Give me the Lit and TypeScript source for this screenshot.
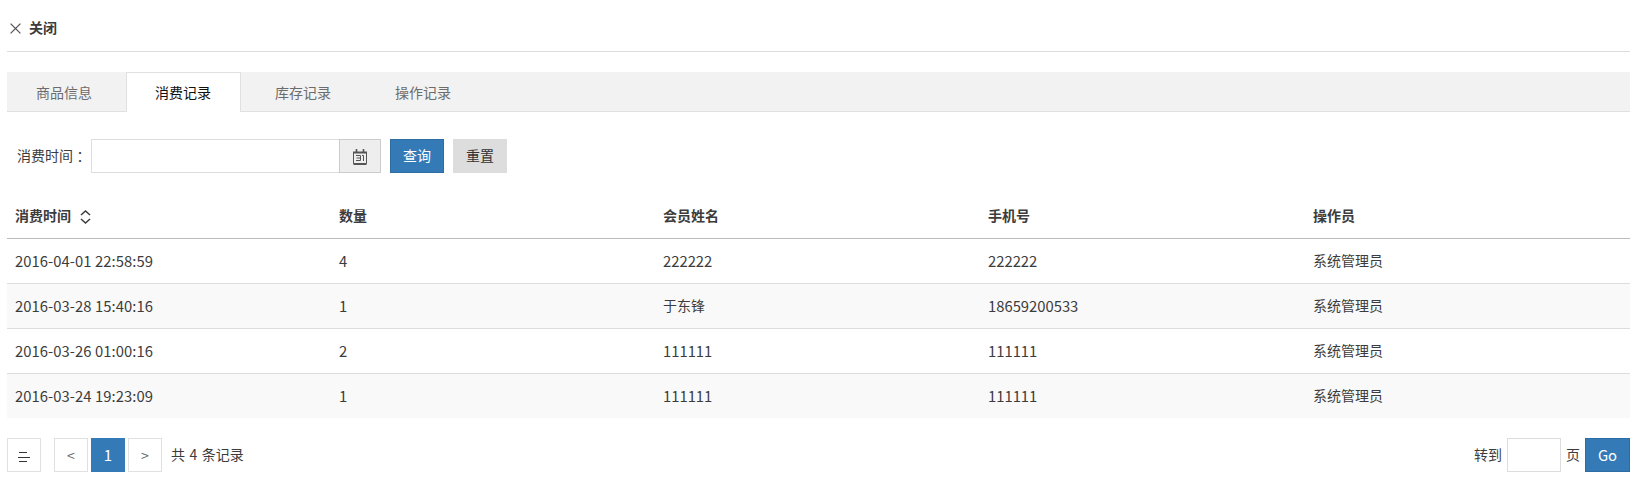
import { LitElement, html, css } from "lit";
import { customElement, state } from "lit/decorators.js";
import { classMap } from "lit/directives/class-map.js";

interface Row {
  time: string;
  count: string;
  name: string;
  phone: string;
  operator: string;
}

const ROWS: Row[] = [
  { time: "2016-04-01 22:58:59", count: "4", name: "222222", phone: "222222", operator: "系统管理员" },
  { time: "2016-03-28 15:40:16", count: "1", name: "于东锋", phone: "18659200533", operator: "系统管理员" },
  { time: "2016-03-26 01:00:16", count: "2", name: "111111", phone: "111111", operator: "系统管理员" },
  { time: "2016-03-24 19:23:09", count: "1", name: "111111", phone: "111111", operator: "系统管理员" },
];

const TABS = ["商品信息", "消费记录", "库存记录", "操作记录"];

@customElement("app-root")
export class AppRoot extends LitElement {
  @state() private active = 1;

  static styles = css`
    :host {
      display: block;
      box-sizing: border-box;
      height: 499px;
      padding: 0 12px 0 7px;
      background: #fff;
      color: #3c3c3c;
      font: 14px/20px "Noto Sans CJK SC", "Noto Sans", sans-serif;
      overflow: hidden;
    }
    *, *::before { box-sizing: border-box; }
    svg { display: block; flex: none; fill: none; stroke: currentColor; }
    input, button { font: inherit; margin: 0; border-radius: 0; outline: none; }
    .close {
      display: flex;
      align-items: center;
      height: 52px;
      padding: 3px 0 0 3px;
      border-bottom: 1px solid #ddd;
      font-weight: 700;
    }
    .close svg { margin: 2px 8px 0 0; color: #555; }
    .tabs {
      display: flex;
      height: 40px;
      margin-top: 20px;
      background: #f2f2f2;
      border-bottom: 1px solid #e0e0e0;
    }
    .tab {
      width: 115px;
      height: 40px;
      margin-right: 5px;
      padding: 0 0 1px 28px;
      border: 1px solid transparent;
      border-bottom: 0;
      background: none;
      color: #6c6c6c;
      line-height: 38px;
      text-align: left;
    }
    .tab:first-child { width: 114px; }
    .tab.on { background: #fff; border-color: #e0e0e0; color: #111; }
    .filter { display: flex; height: 34px; margin-top: 27px; padding-left: 10px; line-height: 34px; }
    .label { width: 74px; white-space: nowrap; line-height: 33px; }
    .colon { display: inline-block; line-height: 1; vertical-align: -1px; font-family: "Noto Sans CJK TC", sans-serif; }
    .date { width: 248px; border: 1px solid #ddd; border-right: 0; }
    .cal {
      display: flex;
      align-items: center;
      justify-content: center;
      width: 42px;
      border: 1px solid #ccc;
      background: #eee;
      color: #555;
      padding: 1px 1px 0 0;
    }
    .btn { width: 54px; height: 34px; padding: 0 0 2px; line-height: 30px; margin-left: 9px; border: 1px solid #ddd; background: #ddd; color: #333; }
    .btn.primary { border-color: #2e6da4; background: #337ab7; color: #fff; }
    .grid { margin-top: 21px; }
    .row {
      display: grid;
      grid-template-columns: 324px 324px 325px 325px 325px;
      height: 45px;
      border-top: 1px solid #ddd;
      line-height: 43px;
    }
    .row > span { padding-left: 8px; }
    .row.head { height: 44px; border: 0; font-weight: 700; line-height: 43px; }
    .row.first { border-top-color: #bbb; }
    .row.alt { background: #f9f9f9; }
    .row .num { font-size: 14.8px; line-height: 44px; }
    .time { letter-spacing: 0.06px; }
    .row .sort { display: flex; align-items: flex-start; }
    .sort svg { margin: 16px 0 0 9px; }
    .pager { display: flex; height: 34px; margin-top: 20px; line-height: 32px; }
    .page {
      display: flex;
      align-items: center;
      justify-content: center;
      width: 34px;
      height: 34px;
      margin-right: 3px;
      padding: 0;
      border: 1px solid #e0e0e0;
      background: #fff;
      color: #666;
    }
    .page.menu { margin-right: 13px; padding-top: 4px; color: #333; }
    .page.current { border-color: #337ab7; background: #337ab7; color: #fff; font-size: 15px; }
    .total { margin-left: 6px; flex: 1; word-spacing: 1.3px; }
    .jump { width: 54px; border: 1px solid #ddd; margin: 0 5px; }
    .go { width: 45px; margin-left: 5px; font-size: 14.8px; line-height: 32px; padding: 0; }
  `;

  private renderRow(r: Row, i: number) {
    return html`<div class=${classMap({ row: true, first: i === 0, alt: i % 2 === 1 })}>
      <span class="num time">${r.time}</span>
      <span class="num">${r.count}</span>
      <span class=${/^\d/.test(r.name) ? "num" : ""}>${r.name}</span>
      <span class="num">${r.phone}</span>
      <span>${r.operator}</span>
    </div>`;
  }

  render() {
    return html`
      <div class="close">
        <svg width="11" height="11" viewBox="0 0 11 11" stroke-width="1.3"><path d="M.6.6l9.8 9.8M10.4.6L.6 10.4" /></svg>
        <span>关闭</span>
      </div>
      <nav class="tabs">
        ${TABS.map((t, i) => html`<button class=${classMap({ tab: true, on: i === this.active })} @click=${() => (this.active = i)}>${t}</button>`)}
      </nav>
      <div class="filter">
        <span class="label">消费时间<span class="colon" lang="zh-TW">：</span></span>
        <input class="date" />
        <button class="cal">
          <svg width="14" height="16" viewBox="0 0 14 16"><path d="M.5 3v11.5h13V3" /><path d="M0 3.5h14M.5 15h13" stroke-width="2" /><path d="M3.5 0v4M10.5 0v4" stroke-width="1.6" /><path d="M3 6.5h4.5v5H3M3.5 9h4M9 6.5h1.5V12" /></svg>
        </button>
        <button class="btn primary">查询</button>
        <button class="btn">重置</button>
      </div>
      <div class="grid">
        <div class="row head">
          <span class="sort">消费时间<svg width="11" height="14" viewBox="0 0 11 14" stroke-width="1.5"><path d="M1 5l4.5-4L10 5M1 9l4.5 4L10 9" /></svg></span>
          <span>数量</span><span>会员姓名</span><span>手机号</span><span>操作员</span>
        </div>
        ${ROWS.map((r, i) => this.renderRow(r, i))}
      </div>
      <div class="pager">
        <button class="page menu"><svg width="12" height="10" viewBox="0 0 12 10"><path d="M1 .5h8M0 5.5h12M1 9.5h8" /></svg></button>
        <button class="page">&lt;</button>
        <button class="page current">1</button>
        <button class="page">&gt;</button>
        <span class="total">共 4 条记录</span>
        <span>转到</span><input class="jump" /><span>页</span>
        <button class="btn primary go">Go</button>
      </div>
    `;
  }
}
